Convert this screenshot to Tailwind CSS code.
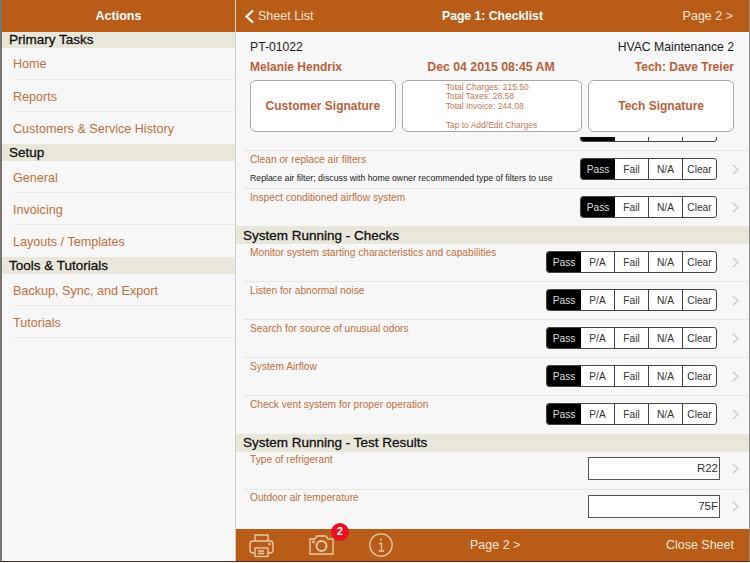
<!DOCTYPE html>
<html lang="en">
<head>
    <meta charset="UTF-8">
    <title>Page 1: Checklist</title>
    <script src="https://cdn.jsdelivr.net/npm/@tailwindcss/browser@4"></script>
</head>
<body class="w-[750px] h-[563px] overflow-hidden bg-[#f7f7f7] font-['Liberation_Sans',sans-serif]">

<div class="flex h-[562px] border-l-2 border-l-[#77746f] border-b border-b-[#4a3020] border-r border-r-[#8a8a8a]">

    <!-- Sidebar -->
    <aside class="w-[233px] shrink-0 flex flex-col">
        <div class="h-8 shrink-0 bg-[#b85c17] flex items-center justify-center text-white font-bold text-[12.5px]">Actions</div>
        <div class="h-4 bg-[#e9e7da] pl-[7px] flex items-center text-[13.5px] text-[#111]"><span class="[-webkit-text-stroke:0.3px_#111]">Primary Tasks</span></div>
        <a class="h-8 ml-[11px] pt-[1px] flex items-center text-[12.6px] text-[#bf703a] border-b border-[#e8e8e8]">Home</a>
        <a class="h-8 ml-[11px] pt-[3px] flex items-center text-[12.6px] text-[#bf703a] border-b border-[#e8e8e8]">Reports</a>
        <a class="h-8 ml-[11px] pt-[2px] flex items-center text-[12.6px] text-[#bf703a]">Customers &amp; Service History</a>
        <div class="h-[17px] bg-[#e9e7da] pl-[7px] pt-[2px] flex items-center text-[13.5px] text-[#111]"><span class="[-webkit-text-stroke:0.3px_#111]">Setup</span></div>
        <a class="h-8 ml-[11px] pt-[3px] flex items-center text-[12.6px] text-[#bf703a] border-b border-[#e8e8e8]">General</a>
        <a class="h-8 ml-[11px] pt-[3px] flex items-center text-[12.6px] text-[#bf703a] border-b border-[#e8e8e8]">Invoicing</a>
        <a class="h-8 ml-[11px] pt-[2px] flex items-center text-[12.6px] text-[#bf703a]">Layouts / Templates</a>
        <div class="h-[17px] bg-[#e9e7da] pl-[7px] pt-[2px] flex items-center text-[13.5px] text-[#111]"><span class="[-webkit-text-stroke:0.3px_#111]">Tools &amp; Tutorials</span></div>
        <a class="h-8 ml-[11px] pt-[3px] flex items-center text-[12.6px] text-[#bf703a] border-b border-[#e8e8e8]">Backup, Sync, and Export</a>
        <a class="h-8 ml-[11px] pt-[3px] flex items-center text-[12.6px] text-[#bf703a] border-b border-[#e8e8e8]">Tutorials</a>
    </aside>

    <!-- Main -->
    <main class="flex-1 min-w-0 flex flex-col border-l border-[#cfcfcf]">
        <header class="h-8 shrink-0 bg-[#b85c17] grid grid-cols-3 items-center text-white text-[12.5px] pl-[16px] pr-[16px]">
            <div class="flex items-center gap-[3px] -ml-[8px] text-[#f7e6d8]">
                <svg width="11" height="15" viewBox="0 0 11 15" fill="none" stroke="#fff" stroke-width="2.2"><path d="M9 1.5 L2.5 7.5 L9 13.5"/></svg>
                <span>Sheet List</span>
            </div>
            <div class="text-center font-bold text-[12.2px] whitespace-nowrap">Page 1: Checklist</div>
            <div class="text-right text-[#f7e6d8]">Page 2 &gt;</div>
        </header>

        <!-- Sheet summary -->
        <section class="h-[99px] shrink-0 pl-[14px] pr-[15px] pt-[7px]">
            <div class="flex justify-between text-[12.2px] text-[#222] h-[16px] items-center">
                <span>PT-01022</span><span>HVAC Maintenance 2</span>
            </div>
            <div class="grid grid-cols-3 text-[12px] font-bold text-[#b8623a] h-[20px] mt-[2px] items-center">
                <span>Melanie Hendrix</span>
                <span class="text-center text-[12.3px] pr-[2px] whitespace-nowrap">Dec 04 2015 08:45 AM</span>
                <span class="text-right">Tech: Dave Treier</span>
            </div>
            <div class="flex gap-[6px] mt-[3px] h-[52px]">
                <div class="w-[146px] rounded-[6px] border border-[#a9a9a9] bg-white flex items-center justify-center text-[12px] font-bold text-[#b8623a]">Customer Signature</div>
                <div class="w-[181px] rounded-[6px] border border-[#a9a9a9] bg-white pl-[43px] pt-[1.5px] text-[8.5px] leading-[9.5px] text-[#bd7a55]">
                    <p>Total Charges: 215.50</p>
                    <p>Total Taxes: 28.58</p>
                    <p>Total Invoice: 244.08</p>
                    <p class="mt-[9.5px]">Tap to Add/Edit Charges</p>
                </div>
                <div class="w-[146px] rounded-[6px] border border-[#a9a9a9] bg-white flex items-center justify-center text-[12px] font-bold text-[#b8623a]">Tech Signature</div>
            </div>
        </section>

        <!-- Checklist -->
        <div class="flex-1 min-h-0 overflow-hidden">
            <div class="h-[20px] ml-[8px] pt-[6px] border-b border-[#e6e6e6] flex justify-end pr-[32px]">
                <div class="h-[5px] overflow-hidden flex flex-col justify-end">
                    <div class="flex w-[137px] h-[22px] shrink-0 rounded-[3px] border border-[#444] bg-white">
                        <span class="w-[34px] bg-black rounded-l-[2px]"></span><span class="w-[34px] border-r border-[#444]"></span><span class="w-[34px] border-r border-[#444]"></span><span class="flex-1"></span>
                    </div>
                </div>
            </div>

            <div class="h-[38px] ml-[8px] pl-[6px] pr-[10px] pt-[2px] border-b border-[#e6e6e6] flex justify-between">
                <div>
                    <p class="text-[10.2px] leading-[14px] text-[#bf703a]">Clean or replace air filters</p>
                    <p class="text-[8.75px] leading-[12px] mt-[5px] text-[#222]">Replace air filter; discuss with home owner recommended type of filters to use</p>
                </div>
                <div class="flex items-start gap-[15px] pt-[5px]">
                    <div class="flex w-[137px] h-[22px] rounded-[3px] border border-[#444] bg-white text-[10.2px] text-[#333] overflow-hidden">
                        <span class="w-[34px] pt-[2px] bg-black text-[#ddd] flex items-center justify-center">Pass</span>
                        <span class="w-[34px] pt-[2px] border-r border-[#444] flex items-center justify-center">Fail</span>
                        <span class="w-[34px] pt-[2px] border-r border-[#444] flex items-center justify-center">N/A</span>
                        <span class="flex-1 pt-[2px] flex items-center justify-center">Clear</span>
                    </div>
                    <svg class="mt-[6px]" width="7" height="11" viewBox="0 0 7 11" fill="none" stroke="#c8c8c8" stroke-width="1.2"><path d="M1 1 L6 5.5 L1 10"/></svg>
                </div>
            </div>

            <div class="h-[37px] ml-[8px] pl-[6px] pr-[10px] pt-[2px] flex justify-between">
                <p class="text-[10.2px] leading-[14px] text-[#bf703a]">Inspect conditioned airflow system</p>
                <div class="flex items-start gap-[15px] pt-[5px]">
                    <div class="flex w-[137px] h-[22px] rounded-[3px] border border-[#444] bg-white text-[10.2px] text-[#333] overflow-hidden">
                        <span class="w-[34px] pt-[2px] bg-black text-[#ddd] flex items-center justify-center">Pass</span>
                        <span class="w-[34px] pt-[2px] border-r border-[#444] flex items-center justify-center">Fail</span>
                        <span class="w-[34px] pt-[2px] border-r border-[#444] flex items-center justify-center">N/A</span>
                        <span class="flex-1 pt-[2px] flex items-center justify-center">Clear</span>
                    </div>
                    <svg class="mt-[6px]" width="7" height="11" viewBox="0 0 7 11" fill="none" stroke="#c8c8c8" stroke-width="1.2"><path d="M1 1 L6 5.5 L1 10"/></svg>
                </div>
            </div>

            <div class="h-[18px] bg-[#e9e7da] pl-[7px] pt-[2px] flex items-center text-[13.5px] text-[#111]"><span class="[-webkit-text-stroke:0.3px_#111]">System Running - Checks</span></div>

            <div class="h-[38px] ml-[8px] pl-[6px] pr-[10px] pt-[2px] border-b border-[#e6e6e6] flex justify-between">
                <p class="text-[10.2px] leading-[14px] text-[#bf703a]">Monitor system starting characteristics and capabilities</p>
                <div class="flex items-start gap-[15px] pt-[5px]">
                    <div class="flex w-[171px] h-[22px] rounded-[3px] border border-[#444] bg-white text-[10.2px] text-[#333] overflow-hidden">
                        <span class="w-[34px] pt-[2px] bg-black text-[#ddd] flex items-center justify-center">Pass</span>
                        <span class="w-[34px] pt-[2px] border-r border-[#444] flex items-center justify-center">P/A</span>
                        <span class="w-[34px] pt-[2px] border-r border-[#444] flex items-center justify-center">Fail</span>
                        <span class="w-[34px] pt-[2px] border-r border-[#444] flex items-center justify-center">N/A</span>
                        <span class="flex-1 pt-[2px] flex items-center justify-center">Clear</span>
                    </div>
                    <svg class="mt-[6px]" width="7" height="11" viewBox="0 0 7 11" fill="none" stroke="#c8c8c8" stroke-width="1.2"><path d="M1 1 L6 5.5 L1 10"/></svg>
                </div>
            </div>

            <div class="h-[38px] ml-[8px] pl-[6px] pr-[10px] pt-[2px] border-b border-[#e6e6e6] flex justify-between">
                <p class="text-[10.2px] leading-[14px] text-[#bf703a]">Listen for abnormal noise</p>
                <div class="flex items-start gap-[15px] pt-[5px]">
                    <div class="flex w-[171px] h-[22px] rounded-[3px] border border-[#444] bg-white text-[10.2px] text-[#333] overflow-hidden">
                        <span class="w-[34px] pt-[2px] bg-black text-[#ddd] flex items-center justify-center">Pass</span>
                        <span class="w-[34px] pt-[2px] border-r border-[#444] flex items-center justify-center">P/A</span>
                        <span class="w-[34px] pt-[2px] border-r border-[#444] flex items-center justify-center">Fail</span>
                        <span class="w-[34px] pt-[2px] border-r border-[#444] flex items-center justify-center">N/A</span>
                        <span class="flex-1 pt-[2px] flex items-center justify-center">Clear</span>
                    </div>
                    <svg class="mt-[6px]" width="7" height="11" viewBox="0 0 7 11" fill="none" stroke="#c8c8c8" stroke-width="1.2"><path d="M1 1 L6 5.5 L1 10"/></svg>
                </div>
            </div>

            <div class="h-[38px] ml-[8px] pl-[6px] pr-[10px] pt-[2px] border-b border-[#e6e6e6] flex justify-between">
                <p class="text-[10.2px] leading-[14px] text-[#bf703a]">Search for source of unusual odors</p>
                <div class="flex items-start gap-[15px] pt-[5px]">
                    <div class="flex w-[171px] h-[22px] rounded-[3px] border border-[#444] bg-white text-[10.2px] text-[#333] overflow-hidden">
                        <span class="w-[34px] pt-[2px] bg-black text-[#ddd] flex items-center justify-center">Pass</span>
                        <span class="w-[34px] pt-[2px] border-r border-[#444] flex items-center justify-center">P/A</span>
                        <span class="w-[34px] pt-[2px] border-r border-[#444] flex items-center justify-center">Fail</span>
                        <span class="w-[34px] pt-[2px] border-r border-[#444] flex items-center justify-center">N/A</span>
                        <span class="flex-1 pt-[2px] flex items-center justify-center">Clear</span>
                    </div>
                    <svg class="mt-[6px]" width="7" height="11" viewBox="0 0 7 11" fill="none" stroke="#c8c8c8" stroke-width="1.2"><path d="M1 1 L6 5.5 L1 10"/></svg>
                </div>
            </div>

            <div class="h-[38px] ml-[8px] pl-[6px] pr-[10px] pt-[2px] border-b border-[#e6e6e6] flex justify-between">
                <p class="text-[10.2px] leading-[14px] text-[#bf703a]">System Airflow</p>
                <div class="flex items-start gap-[15px] pt-[5px]">
                    <div class="flex w-[171px] h-[22px] rounded-[3px] border border-[#444] bg-white text-[10.2px] text-[#333] overflow-hidden">
                        <span class="w-[34px] pt-[2px] bg-black text-[#ddd] flex items-center justify-center">Pass</span>
                        <span class="w-[34px] pt-[2px] border-r border-[#444] flex items-center justify-center">P/A</span>
                        <span class="w-[34px] pt-[2px] border-r border-[#444] flex items-center justify-center">Fail</span>
                        <span class="w-[34px] pt-[2px] border-r border-[#444] flex items-center justify-center">N/A</span>
                        <span class="flex-1 pt-[2px] flex items-center justify-center">Clear</span>
                    </div>
                    <svg class="mt-[6px]" width="7" height="11" viewBox="0 0 7 11" fill="none" stroke="#c8c8c8" stroke-width="1.2"><path d="M1 1 L6 5.5 L1 10"/></svg>
                </div>
            </div>

            <div class="h-[38px] ml-[8px] pl-[6px] pr-[10px] pt-[2px] flex justify-between">
                <p class="text-[10.2px] leading-[14px] text-[#bf703a]">Check vent system for proper operation</p>
                <div class="flex items-start gap-[15px] pt-[5px]">
                    <div class="flex w-[171px] h-[22px] rounded-[3px] border border-[#444] bg-white text-[10.2px] text-[#333] overflow-hidden">
                        <span class="w-[34px] pt-[2px] bg-black text-[#ddd] flex items-center justify-center">Pass</span>
                        <span class="w-[34px] pt-[2px] border-r border-[#444] flex items-center justify-center">P/A</span>
                        <span class="w-[34px] pt-[2px] border-r border-[#444] flex items-center justify-center">Fail</span>
                        <span class="w-[34px] pt-[2px] border-r border-[#444] flex items-center justify-center">N/A</span>
                        <span class="flex-1 pt-[2px] flex items-center justify-center">Clear</span>
                    </div>
                    <svg class="mt-[6px]" width="7" height="11" viewBox="0 0 7 11" fill="none" stroke="#c8c8c8" stroke-width="1.2"><path d="M1 1 L6 5.5 L1 10"/></svg>
                </div>
            </div>

            <div class="h-[18px] bg-[#e9e7da] pl-[7px] flex items-center text-[13.5px] text-[#111]"><span class="[-webkit-text-stroke:0.3px_#111]">System Running - Test Results</span></div>

            <div class="h-[38px] ml-[8px] pl-[6px] pr-[10px] pt-[1px] border-b border-[#e6e6e6] flex justify-between">
                <p class="text-[10.2px] leading-[14px] text-[#bf703a]">Type of refrigerant</p>
                <div class="flex items-start gap-[12px] pt-[4px]">
                    <div class="w-[132px] h-[23px] border border-[#555] bg-white text-[11.5px] text-[#333] text-right leading-[21px] pr-[1px]">R22</div>
                    <svg class="mt-[6px]" width="7" height="11" viewBox="0 0 7 11" fill="none" stroke="#c8c8c8" stroke-width="1.2"><path d="M1 1 L6 5.5 L1 10"/></svg>
                </div>
            </div>

            <div class="h-[38px] ml-[8px] pl-[6px] pr-[10px] pt-[1px] flex justify-between">
                <p class="text-[10.2px] leading-[14px] text-[#bf703a]">Outdoor air temperature</p>
                <div class="flex items-start gap-[12px] pt-[4px]">
                    <div class="w-[132px] h-[23px] border border-[#555] bg-white text-[11.5px] text-[#333] text-right leading-[21px] pr-[1px]">75F</div>
                    <svg class="mt-[6px]" width="7" height="11" viewBox="0 0 7 11" fill="none" stroke="#c8c8c8" stroke-width="1.2"><path d="M1 1 L6 5.5 L1 10"/></svg>
                </div>
            </div>
        </div>

        <!-- Bottom toolbar -->
        <footer class="h-8 shrink-0 bg-[#b85c17] flex items-center pl-[13px] pr-[15px] text-[12.5px] text-[#f7e6d8]">
            <svg width="25" height="25" viewBox="0 0 25 25" fill="none" stroke="#eac6aa" stroke-width="1.4">
                <path d="M6 8 V2 H19 V8"/>
                <rect x="1" y="8" width="23" height="12" rx="3"/>
                <rect x="6" y="15" width="13" height="8.5" fill="#b85c17"/>
                <path d="M9 18 H15 M9 20.5 H15"/>
                <circle cx="20.5" cy="11" r="0.6" fill="#eac6aa"/>
            </svg>
            <div class="relative ml-[35px] w-[25px] h-[22px]">
                <svg width="25" height="22" viewBox="0 0 25 22" fill="none" stroke="#eac6aa" stroke-width="1.4">
                    <path d="M1 5 H6 L8 2 H17 L19 5 H24 V20 H1 Z"/>
                    <circle cx="12.5" cy="12" r="5" stroke-width="2"/>
                    <circle cx="4.5" cy="8" r="0.7" fill="#eac6aa"/>
                </svg>
                <span class="absolute -top-[11px] left-[22px] w-[18px] h-[18px] rounded-full bg-[#e8111d] text-white text-[10.5px] font-bold flex items-center justify-center">2</span>
            </div>
            <svg class="ml-[35px]" width="24" height="24" viewBox="0 0 24 24" fill="none" stroke="#eac6aa" stroke-width="1.3">
                <circle cx="12" cy="12" r="11.2"/>
                <path d="M10 10.5 H12.5 V18 M9.8 18 H15" stroke-width="1.4"/>
                <circle cx="12" cy="6.5" r="1.1" fill="#eac6aa" stroke="none"/>
            </svg>
            <span class="ml-[77px]">Page 2 &gt;</span>
            <span class="ml-auto">Close Sheet</span>
        </footer>
    </main>
</div>

</body>
</html>
